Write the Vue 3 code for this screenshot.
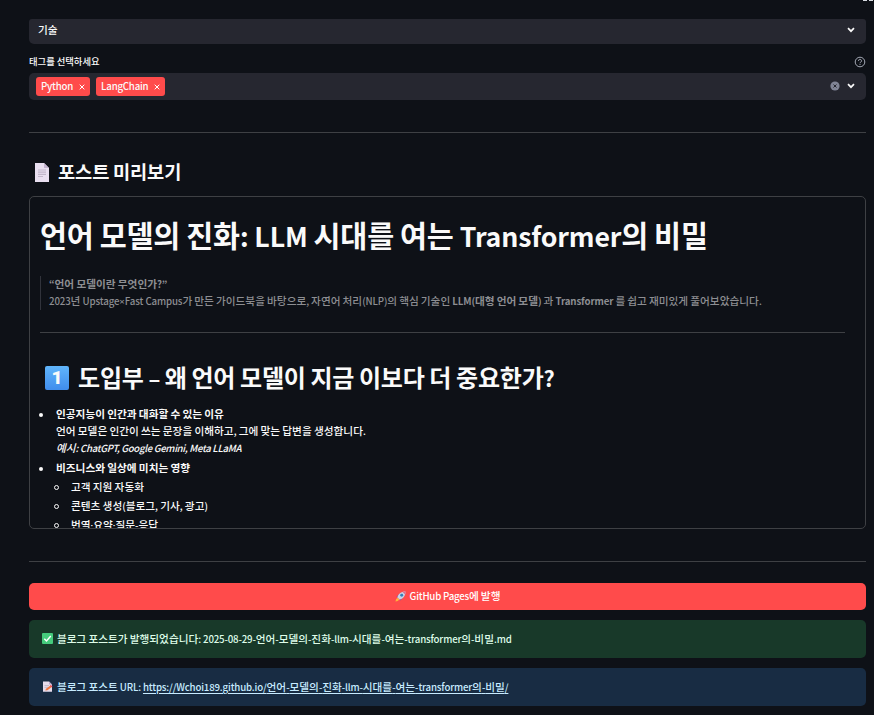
<script setup>
import { h } from 'vue'

const tags = ['Python', 'LangChain']
const impacts = ['고객 지원 자동화', '콘텐츠 생성(블로그, 기사, 광고)', '번역·요약·질문-응답']

// Sets Latin runs slightly smaller than the Hangul around them.
const Mixed = (props) =>
  props.text.split(/([ -~–“”]+|[×·])/).filter(Boolean).map((part) => {
    if (/^[×·]/.test(part)) return h('span', { class: 'narrow' }, part)
    return /^[ -~–“”]/.test(part) ? h('span', { class: 'latin' }, part) : part
  })
Mixed.props = ['text']
</script>

<template>
  <main class="page">
    <i class="dot dot-a"></i><i class="dot dot-b"></i>
    <div class="select">
      <span class="value">기술</span>
      <svg class="chev" viewBox="0 0 8 6"><path d="M1 1.2 4 4.2 7 1.2" /></svg>
    </div>
    <div class="label-row">
      <span class="label"><Mixed text="태그를 선택하세요" /></span>
      <svg class="help" viewBox="0 0 12 12"><circle cx="6" cy="6" r="4.8" /><path d="M4.5 4.9a1.5 1.5 0 1 1 2.3 1.2Q6 6.5 6 7.2M6 8.1v.9" /></svg>
    </div>
    <div class="multi">
      <span v-for="t in tags" :key="t" class="tag"><span class="tag-text"><Mixed :text="t" /></span>
        <svg viewBox="0 0 6 6"><path d="M.7.7 5.3 5.3M5.3.7.7 5.3" /></svg>
      </span>
      <svg class="clear" viewBox="0 0 10 10"><circle cx="5" cy="5" r="4.6" /><path d="M3.5 3.5 6.5 6.5M6.5 3.5 3.5 6.5" /></svg>
      <svg class="chev" viewBox="0 0 8 6"><path d="M1 1.2 4 4.2 7 1.2" /></svg>
    </div>
    <hr class="rule" />
    <h3 class="section">
      <svg class="doc" viewBox="0 0 14 19"><path d="M0 0H9L14 5V19H0Z" fill="#e9dff0" /><path d="M9 0V5H14Z" fill="#c5b5d1" /><path d="M3 7H11M3 9.2H11M3 11.4H11M3 13.5H8" stroke="#c2b7ca" stroke-width="1.2" /></svg>
      <span class="section-text"><Mixed text="포스트 미리보기" /></span>
    </h3>
    <section class="preview">
      <h1><Mixed text="언어 모델의 진화: LLM 시대를 여는 Transformer의 비밀" /></h1>
      <blockquote>
        <p><b><Mixed text="“언어 모델이란 무엇인가?”" /></b></p>
        <p class="intro"><Mixed text="2023년 Upstage×Fast Campus가 만든 가이드북을 바탕으로, 자연어 처리(NLP)의 핵심 기술인 " /><b><Mixed text="LLM(대형 언어 모델)" /></b><Mixed text=" 과 " /><b><Mixed text="Transformer" /></b><Mixed text=" 를 쉽고 재미있게 풀어보았습니다." /></p>
      </blockquote>
      <hr class="inner" />
      <h2>
        <span class="keycap">1</span>
        <span class="h2-text"><Mixed text="도입부 – 왜 언어 모델이 지금 이보다 더 중요한가?" /></span>
      </h2>
      <ul class="outer">
        <li>
          <p><b><Mixed text="인공지능이 인간과 대화할 수 있는 이유" /></b></p>
          <p><Mixed text="언어 모델은 인간이 쓰는 문장을 이해하고, 그에 맞는 답변을 생성합니다." /></p>
          <p><em class="example"><Mixed text="예시: ChatGPT, Google Gemini, Meta LLaMA" /></em></p>
        </li>
        <li>
          <p><b><Mixed text="비즈니스와 일상에 미치는 영향" /></b></p>
          <ul class="nested">
            <li v-for="i in impacts" :key="i"><Mixed :text="i" /></li>
          </ul>
        </li>
      </ul>
    </section>
    <hr class="rule second" />
    <button class="publish">
      <svg class="rocket" viewBox="0 0 12 12"><path d="M1.6 6.2 4.4 3.6 6.5 5 4 8Z" fill="#8d4a9c" /><path d="M5.8 10.4 8.4 7.6 7 6 4 8Z" fill="#8d4a9c" /><path d="M2.6 7.2C3 3.4 6.6.5 11.5.5 11.5 5.2 8.6 8.9 4.8 9.4Z" fill="#c9d3e5" /><path d="M8.3 1.1C9.3.7 10.4.5 11.5.5 11.5 1.7 11.2 2.8 10.9 3.8Z" fill="#dd6a8d" /><circle cx="7.3" cy="4.6" r="1.6" fill="#377fb8" /><path d="M2.8 7.3 4.7 9.2Q3.5 11.4.5 11.5.7 8.4 2.8 7.3Z" fill="#ffb13d" /></svg>
      <span class="publish-text"><Mixed text="GitHub Pages에 발행" /></span>
    </button>
    <div class="alert success">
      <svg class="emoji" viewBox="0 0 11 11"><rect width="11" height="11" rx="1" fill="#45cb7c" /><path d="M2.3 5.7 4.5 8 8.8 3" stroke="#fff" stroke-width="1.4" fill="none" /></svg>
      <span class="alert-text"><Mixed text="블로그 포스트가 발행되었습니다: 2025-08-29-언어-모델의-진화-llm-시대를-여는-transformer의-비밀.md" /></span>
    </div>
    <div class="alert info">
      <svg class="emoji" viewBox="0 0 11 11"><path d="M1 .5H7L10 3.5V10.7H1Z" fill="#e6dcec" /><path d="M7 .5V3.5H10Z" fill="#baa7ca" /><path d="M2.5 4.5H7M2.5 6.3H6" stroke="#b8adbf" stroke-width=".7" /><path d="M3.3 9.6 4 7.7 8.7 4.2 10.2 5.8 5.4 9.3Z" fill="#f07842" /><path d="M8.1 4.7 8.9 4 10.5 5.5 9.7 6.2Z" fill="#e33f5f" /></svg>
      <span class="alert-text"><Mixed text="블로그 포스트 URL: " /><a><Mixed text="https://Wchoi189.github.io/언어-모델의-진화-llm-시대를-여는-transformer의-비밀/" /></a></span>
    </div>
  </main>
</template>

<style>
body { background: #0e1117; overflow: hidden; }
.latin { font-size: 0.91em; }
.narrow { font-family: "Noto Sans", sans-serif; font-size: 0.9em; line-height: 1; }
.tag .latin { letter-spacing: -0.22px; }
.intro .latin { letter-spacing: -0.12px; }
.example .latin { letter-spacing: -0.33px; }
.publish .latin { letter-spacing: -0.2px; }
.alert .latin { letter-spacing: -0.17px; }
</style>

<style scoped>
* { box-sizing: border-box; margin: 0; padding: 0; }
.page {
  position: relative; display: flex; flex-direction: column;
  width: 874px; height: 715px; padding: 19px 8px 0 29px; overflow: hidden;
  background: #0e1117; color: #fafafa; white-space: pre;
  font-family: "Noto Sans CJK KR", sans-serif; font-size: 10.67px; font-weight: 500; line-height: 17px;
}
.page > * { flex-shrink: 0; }
svg { flex: none; fill: none; }
.dot { position: absolute; top: 0; height: 1px; background: #d8dce2; }
.dot-a { left: 863px; width: 4px; }
.dot-b { left: 869px; width: 4px; }
.select { height: 25px; border-radius: 3px 3px 5px 5px; background: #262730; display: flex; align-items: center; justify-content: space-between; padding: 0 11px 3px 9px; }
.value { margin-top: -2px; }
.chev { width: 8px; height: 6px; stroke: #fafafa; stroke-width: 1.7; }
.label-row { height: 29px; display: flex; align-items: center; justify-content: space-between; padding-top: 6px; }
.label { font-size: 9.33px; }
.help { width: 12px; height: 12px; stroke: #a3a8b4; stroke-width: 1; }
.multi { height: 27px; border-radius: 5px; background: #262730; display: flex; align-items: center; padding: 0 11px 0 7px; gap: 6px; }
.multi > .chev { margin-top: -1px; margin-left: 1px; }
.tag { height: 19px; border-radius: 3px; background: #ff4b4b; display: flex; align-items: center; padding: 0 5px; gap: 6px; }
.tag-text { margin-top: -1px; }
.tag svg { width: 6px; height: 6px; stroke: #fff; stroke-width: 1; }
.clear { width: 10px; height: 10px; margin-left: auto; margin-top: -1px; }
.clear circle { fill: #808495; }
.clear path { stroke: #262730; stroke-width: 1; }
.rule { border: 0; height: 1px; background: #3e4044; margin-top: 32px; }
.section { display: flex; align-items: center; height: 26px; margin-top: 26px; padding-left: 6px; gap: 9px; font-size: 18.67px; font-weight: 700; }
.section-text { margin-top: -3px; letter-spacing: -0.1px; }
.doc { width: 14px; height: 19px; }
.preview { height: 333px; margin-top: 11px; border: 1px solid #3e4044; border-radius: 5px; overflow: hidden; padding: 19px 20px 0 10px; }
h1 { font-size: 29.33px; font-weight: 700; line-height: 36px; height: 36px; letter-spacing: -0.13px; }
blockquote { display: flex; flex-direction: column; margin-top: 24px; height: 34px; border-left: 1px solid #31333b; padding-left: 8px; color: #8d8e92; }
blockquote p { height: 17px; position: relative; top: -1px; }
b { font-weight: 700; }
.inner { border: 0; height: 1px; background: #3e4044; margin-top: 22px; }
h2 { display: flex; align-items: center; height: 30px; margin-top: 30px; padding-left: 5px; font-size: 24px; font-weight: 700; gap: 9px; }
.h2-text { margin-top: -3px; letter-spacing: -0.2px; }
.keycap { width: 24px; height: 24px; border-radius: 2px; background: linear-gradient(#60b5fb, #408ded); font-family: Roboto, sans-serif; font-size: 19px; font-weight: 900; line-height: 24px; text-align: center; }
.outer { list-style: none; margin-top: 12px; }
.outer p { height: 17px; }
.outer > li { position: relative; padding-left: 16px; margin-bottom: 3px; }
.outer > li::before { content: ""; position: absolute; left: -1px; top: 8px; width: 4px; height: 4px; border-radius: 50%; background: #fafafa; }
.nested { list-style: none; margin-top: 2px; }
.nested > li { position: relative; height: 17px; padding-left: 15px; margin-bottom: 2px; }
.nested > li::before { content: ""; position: absolute; left: -2px; top: 7px; width: 3px; height: 3px; border: 1px solid #fafafa; border-radius: 50%; }
.second { margin-top: 32px; }
.publish { height: 27px; margin-top: 21px; border: 0; border-radius: 5px; background: #ff4b4b; color: #fff; font: inherit; white-space: pre; display: flex; align-items: center; justify-content: center; gap: 4px; }
.publish-text { margin-top: -2px; }
.alert-text { margin-top: -1px; }
.rocket { width: 11px; height: 11px; }
.alert { height: 38px; margin-top: 10px; border-radius: 5px; padding: 0 13px; display: flex; align-items: center; gap: 4px; }
.success { background: #183929; color: #dffde9; }
.info { background: #182c43; color: #c7ebff; }
.emoji { width: 11px; height: 11px; margin-top: -1px; }
a { text-decoration: underline; text-underline-offset: 2px; }
</style>
